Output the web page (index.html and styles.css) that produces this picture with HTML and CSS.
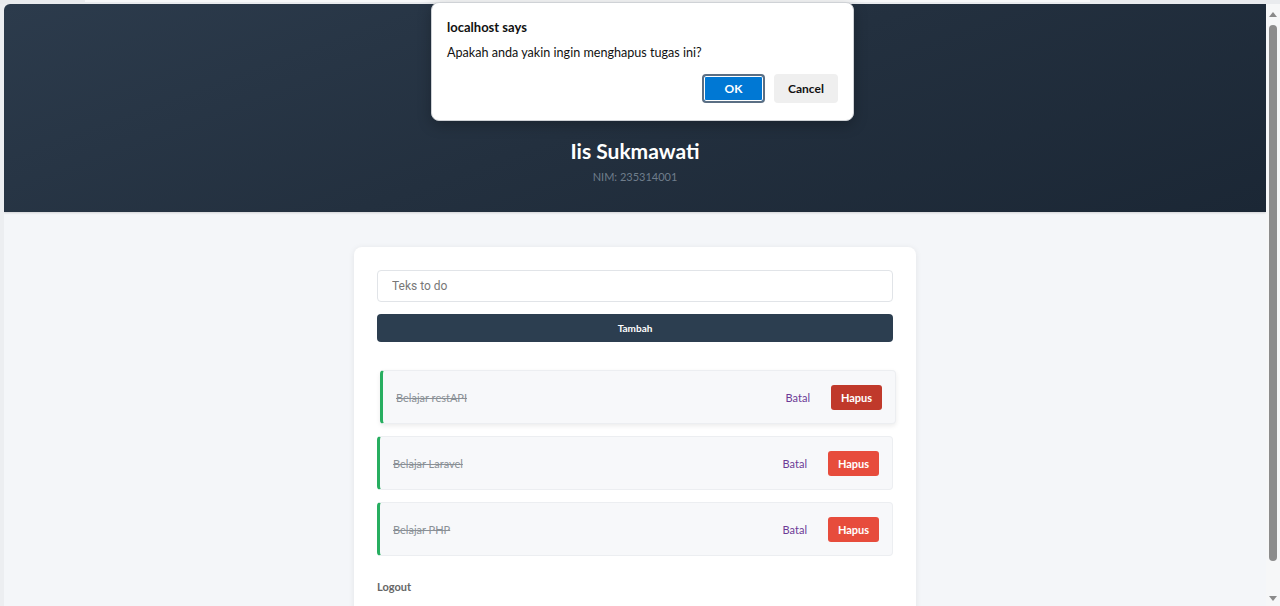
FILE: index.html
```html
<!DOCTYPE html>
<html lang="id">
<head>
<meta charset="utf-8">
<title>Todo</title>
<link rel="stylesheet" href="styles.css">
</head>
<body>
<div class="topstrip"><div class="topstrip-bar"></div></div>
<div class="frame">
  <div class="viewport">
    <header class="hero">
      <h1 class="hero-name">Iis Sukmawati</h1>
      <p class="hero-nim">NIM: 235314001</p>
    </header>
    <main class="main">
      <section class="card">
        <input class="todo-input" type="text" placeholder="Teks to do">
        <button class="btn-add">Tambah</button>
        <ul class="todo-list">
          <li class="todo-item todo-item--hover">
            <span class="todo-text">Belajar restAPI</span>
            <span class="todo-actions">
              <a class="link-batal">Batal</a>
              <button class="btn-hapus btn-hapus--hover">Hapus</button>
            </span>
          </li>
          <li class="todo-item">
            <span class="todo-text">Belajar Laravel</span>
            <span class="todo-actions">
              <a class="link-batal">Batal</a>
              <button class="btn-hapus">Hapus</button>
            </span>
          </li>
          <li class="todo-item">
            <span class="todo-text">Belajar PHP</span>
            <span class="todo-actions">
              <a class="link-batal">Batal</a>
              <button class="btn-hapus">Hapus</button>
            </span>
          </li>
        </ul>
        <a class="logout">Logout</a>
      </section>
    </main>
  </div>
  <div class="scrollbar">
    <span class="sb-arrow sb-up"></span>
    <span class="sb-thumb"></span>
    <span class="sb-arrow sb-down"></span>
  </div>
</div>

<div class="dialog">
  <div class="dialog-title">localhost says</div>
  <div class="dialog-msg">Apakah anda yakin ingin menghapus tugas ini?</div>
  <div class="dialog-actions">
    <button class="dlg-btn dlg-ok">OK</button>
    <button class="dlg-btn dlg-cancel">Cancel</button>
  </div>
</div>
</body>
</html>
```

FILE: styles.css
```css
* { box-sizing: border-box; }
html, body { margin: 0; padding: 0; }
body {
  width: 1280px;
  height: 606px;
  overflow: hidden;
  background: #eceef1;
  font-family: "Lato", "Noto Sans", "Liberation Sans", sans-serif;
  display: flex;
  flex-direction: column;
}
.topstrip {
  height: 4px;
  flex: none;
  background: #e9ebee;
  padding-left: 85px;
}
.topstrip-bar {
  width: 1005px;
  height: 2px;
  background: #f7f8f9;
}
.frame {
  flex: 1;
  display: flex;
  min-height: 0;
  padding-left: 4px;
}
.viewport {
  flex: 1;
  min-width: 0;
  background: #f4f6f9;
  border-top-left-radius: 6px;
  overflow: hidden;
  display: flex;
  flex-direction: column;
}
.hero {
  height: 208px;
  flex: none;
  background: linear-gradient(160deg, #2c3b4c 0%, #23303f 50%, #1b2735 100%);
  text-align: center;
  padding-top: 133px;
  box-shadow: 0 1px 2px rgba(0,0,0,0.15);
}
.hero-name {
  margin: 0;
  color: #ffffff;
  font-family: "Lato", "Open Sans", sans-serif;
  font-size: 21px;
  font-weight: 700;
  line-height: 28px;
}
.hero-nim {
  margin: 5px 0 0;
  color: #6f7d8b;
  font-size: 11px;
  line-height: 14px;
}
.main {
  display: flex;
  justify-content: center;
  padding-top: 35px;
}
.card {
  width: 562px;
  background: #ffffff;
  border-radius: 8px;
  box-shadow: 0 1px 6px rgba(0,0,0,0.08);
  padding: 23px 23px 40px;
  display: flex;
  flex-direction: column;
}
.todo-input {
  height: 32px;
  border: 1px solid #e1e4e8;
  border-radius: 4px;
  padding: 0 14px;
  font-family: "Roboto", "Liberation Sans", sans-serif;
  font-size: 12px;
  color: #333;
  background: #fff;
  outline: none;
}
.todo-input::placeholder { color: #777; }
.btn-add {
  margin-top: 12px;
  height: 28px;
  border: none;
  border-radius: 4px;
  background: #2c3e50;
  color: #ffffff;
  font-family: "Lato", sans-serif;
  font-size: 10px;
  font-weight: 700;
}
.todo-list {
  list-style: none;
  margin: 28px 0 0;
  padding: 0;
  display: flex;
  flex-direction: column;
  gap: 12px;
}
.todo-item {
  height: 54px;
  background: #f7f8fa;
  border: 1px solid #eceef1;
  border-left: 3px solid #27ae60;
  border-radius: 4px;
  display: flex;
  align-items: center;
  justify-content: space-between;
  padding: 0 13px 0 13px;
}
.todo-item--hover {
  transform: translateX(3px);
  box-shadow: 0 2px 5px rgba(0,0,0,0.08);
}
.todo-text {
  font-size: 11px;
  color: #8a9096;
  text-decoration: line-through;
}
.todo-actions {
  display: flex;
  align-items: center;
  gap: 21px;
}
.link-batal {
  font-size: 11px;
  color: #6c3a96;
}
.btn-hapus {
  width: 51px;
  height: 25px;
  border: none;
  border-radius: 3px;
  background: #e74c3c;
  color: #fff;
  font-family: "Lato", sans-serif;
  font-size: 11px;
  font-weight: 700;
}
.btn-hapus--hover { background: #c0392b; }
.logout {
  margin-top: 24px;
  font-size: 11px;
  font-weight: 700;
  color: #666;
}
.scrollbar {
  width: 14px;
  flex: none;
  background: #f6f7f8;
  display: flex;
  flex-direction: column;
  align-items: center;
  padding: 8px 0 5px;
}
.sb-arrow {
  width: 0;
  height: 0;
  border-left: 4px solid transparent;
  border-right: 4px solid transparent;
}
.sb-up { border-bottom: 5px solid #8a8a8a; }
.sb-down { border-top: 5px solid #8a8a8a; }
.sb-thumb {
  flex: 1;
  width: 8px;
  margin: 8px 0 35px;
  background: #8c8c8c;
  border-radius: 4px;
}
.dialog {
  position: absolute;
  left: 431px;
  top: 2px;
  width: 423px;
  height: 119px;
  background: #ffffff;
  border: 1px solid #cfd2d6;
  border-radius: 8px;
  box-shadow: 0 4px 14px rgba(0,0,0,0.25);
  padding: 15px 15px 0;
  font-family: "Lato", "Noto Sans", sans-serif;
  color: #111;
}
.dialog-title {
  font-size: 13px;
  font-weight: 700;
  line-height: 18px;
}
.dialog-msg {
  margin-top: 8px;
  font-size: 12.6px;
  line-height: 18px;
}
.dialog-actions {
  margin-top: 12px;
  display: flex;
  justify-content: flex-end;
  gap: 9px;
}
.dlg-btn {
  height: 29px;
  border-radius: 4px;
  font-family: "Lato", "Noto Sans", sans-serif;
  font-size: 12px;
  font-weight: 700;
}
.dlg-ok {
  width: 63px;
  background: #0078d4;
  color: #fff;
  border: 2px solid #5b6f84;
  box-shadow: inset 0 0 0 1px #ffffff;
}
.dlg-cancel {
  width: 64px;
  background: #efefef;
  color: #111;
  border: none;
}
```
